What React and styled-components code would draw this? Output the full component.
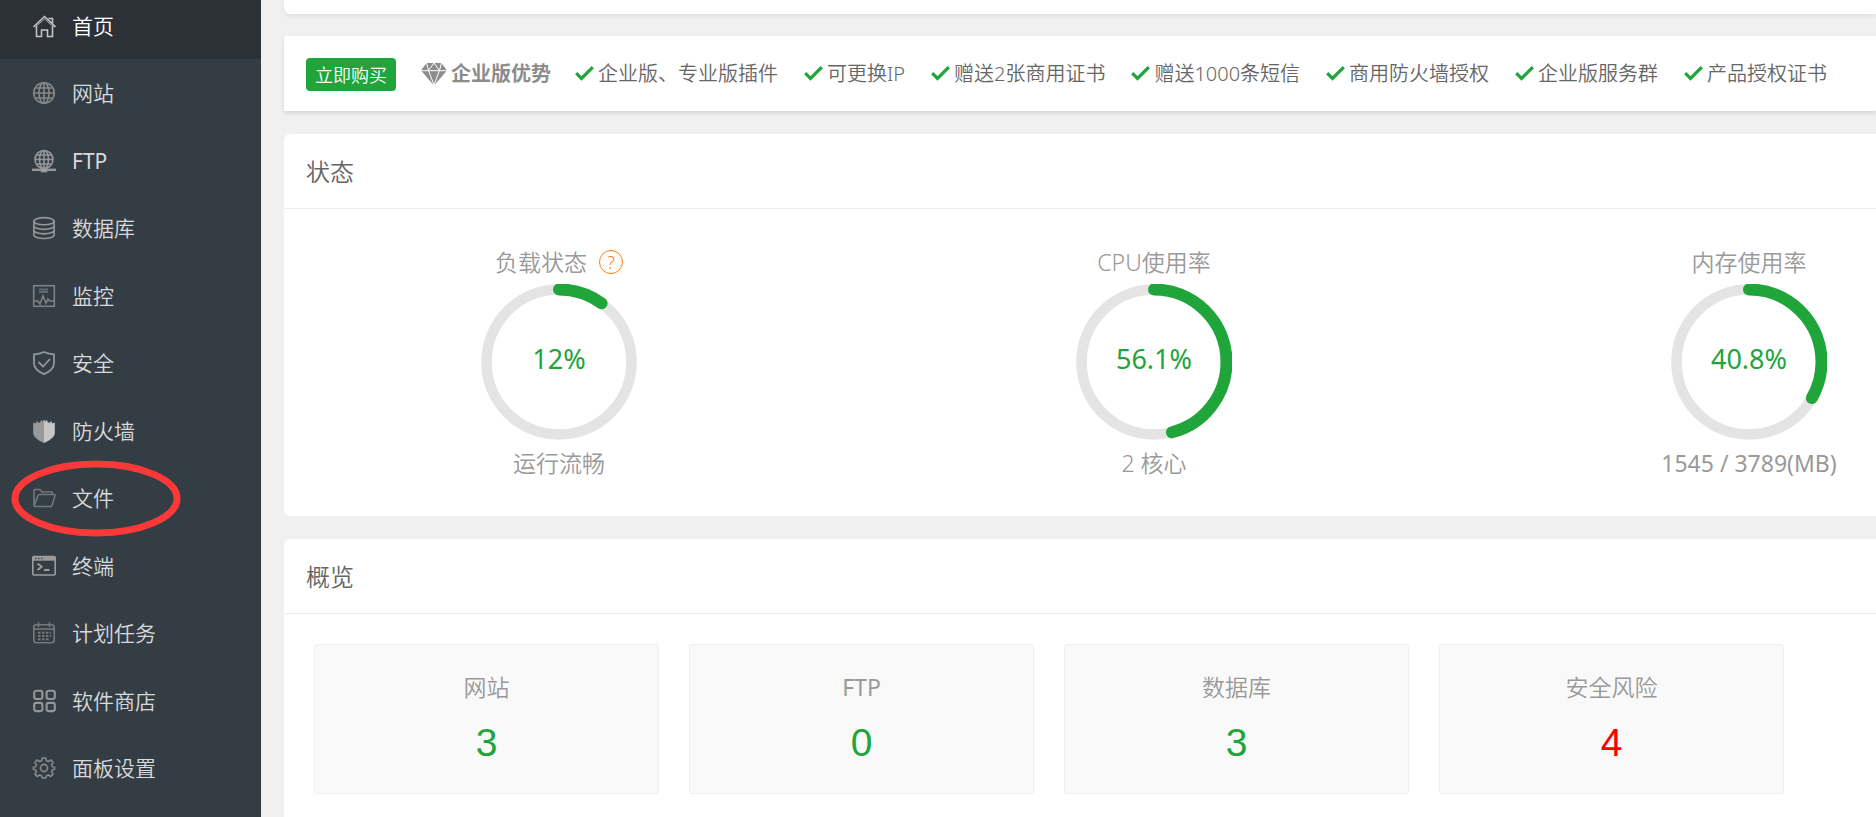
import React from "react";
import styled, { createGlobalStyle } from "styled-components";

const GlobalStyle = createGlobalStyle`
  *, *::before, *::after { box-sizing: border-box; }
  body {
    margin: 0;
    background: #f0f0f0;
    color: #666;
    font-family: "Noto Sans", "Noto Sans CJK SC", sans-serif;
    font-weight: 350;
  }
  ul { list-style: none; margin: 0; padding: 0; }
  a { color: inherit; text-decoration: none; }
  h2, p { margin: 0; font-weight: inherit; }
`;

const GREEN = "#20a53a";

// Latin-only strings need the regular cut to look as dark as the Chinese ones.
const textWeight = (text) => (/[\u4e00-\u9fff]/.test(text) ? 350 : 400);

const Page = styled.div`
  display: grid;
  grid-template-columns: 261px minmax(0, 1fr);
  min-height: 100vh;
`;

const Sidebar = styled.nav`
  background: #353d44;
  overflow: hidden;
`;

const MenuList = styled.ul`
  margin-top: -8px;
`;

const MenuItem = styled.li`
  position: relative;
  height: 67px;
  &:nth-child(even) { height: 68px; }
`;

const MenuLink = styled.a`
  display: flex;
  align-items: center;
  gap: 16px;
  height: 100%;
  padding-left: 32px;
  font-size: 21px;
  font-weight: ${(p) => p.$weight};
  line-height: 30px;
  color: ${(p) => (p.$active ? "#fff" : "#d8dbdd")};
  background: ${(p) => (p.$active ? "#2c3138" : "transparent")};
`;

const MenuIcon = styled.svg`
  flex: none;
  width: 24px;
  height: 24px;
  fill: none;
  stroke: ${(p) => p.$tone};
  stroke-width: 1.6;
`;

const Highlight = styled.svg`
  position: absolute;
  left: 11px;
  top: -4px;
  width: 170px;
  height: 77px;
  pointer-events: none;
`;

const Main = styled.main`
  display: flex;
  flex-direction: column;
  padding-left: 23px;
`;

const TopCard = styled.div`
  height: 14px;
  margin-bottom: 22px;
  background: #fff;
  border-bottom-left-radius: 6px;
  box-shadow: 0 2px 5px rgba(0, 0, 0, 0.07);
`;

const Promo = styled.section`
  display: flex;
  align-items: center;
  height: 75px;
  margin-bottom: 23px;
  padding-left: 22px;
  background: #fff;
  box-shadow: 0 2px 4px rgba(0, 0, 0, 0.12);
  font-size: 20px;
  line-height: 28px;
  white-space: nowrap;
`;

const BuyButton = styled.button`
  width: 90px;
  height: 33px;
  margin: 2px 25px 0 0;
  padding: 0;
  border: 0;
  border-radius: 4px;
  background: ${GREEN};
  color: #fff;
  font: inherit;
  font-size: 18px;
  cursor: pointer;
`;

const PromoTitle = styled.strong`
  display: flex;
  align-items: center;
  gap: 4px;
  margin-right: 24px;
  color: #8c8c8c;
  font-weight: 700;
`;

const Diamond = styled.svg`
  width: 26px;
  height: 24px;
`;

const FeatureList = styled.ul`
  display: flex;
  gap: 26px;
`;

const Feature = styled.li`
  display: flex;
  align-items: center;
  gap: 4px;
`;

const Check = styled.svg`
  width: 19px;
  height: 16px;
`;

const Card = styled.section`
  background: #fff;
  border-top-left-radius: 6px;
  border-bottom-left-radius: ${(p) => (p.$last ? 0 : 6)}px;
  margin-bottom: ${(p) => (p.$last ? 0 : 23)}px;
  flex: ${(p) => (p.$last ? "1" : "none")};
`;

const CardTitle = styled.h2`
  height: 75px;
  padding: 20px 22px;
  border-bottom: 1px solid #ececec;
  font-size: 24px;
  line-height: 36px;
`;

const GaugeRow = styled.div`
  display: flex;
  justify-content: space-between;
  padding: 41px 37px 41px 185px;
`;

const GaugeBox = styled.div`
  display: flex;
  flex-direction: column;
  align-items: center;
  width: 180px;
  color: #999;
  font-size: 23px;
  line-height: 24px;
  white-space: nowrap;
`;

const GaugeName = styled.p`
  display: flex;
  align-items: center;
  gap: 12px;
`;

const GaugeNote = styled.p`
  font-weight: ${(p) => p.$weight};
`;

const HelpLink = styled.a`
  width: 24px;
  height: 24px;
  border: 1px solid #ff7f0e;
  border-radius: 50%;
  color: #ff7f0e;
  font-size: 18px;
  line-height: 23px;
  text-align: center;
`;

const Dial = styled.div`
  display: grid;
  width: 156px;
  height: 156px;
  margin: 10px 0 11px;
  > * { grid-area: 1 / 1; }
`;

const DialValue = styled.span`
  padding-bottom: 6px;
  align-self: center;
  text-align: center;
  color: ${GREEN};
  font-size: 27px;
  font-weight: 400;
  line-height: 36px;
`;

const StatGrid = styled.div`
  display: grid;
  grid-template-columns: repeat(4, minmax(0, 1fr));
  gap: 30px;
  padding: 30px 92px 23px 30px;
`;

const Stat = styled.div`
  height: 150px;
  padding-top: 26px;
  border: 1px solid #efefef;
  border-radius: 3px;
  background: #f9f9f9;
  text-align: center;
`;

const StatLabel = styled.p`
  color: #999;
  font-size: 23px;
  font-weight: ${(p) => p.$weight};
  line-height: 32px;
`;

const StatValue = styled.a`
  display: block;
  margin-top: 18px;
  color: ${(p) => (p.$danger ? "#f00" : GREEN)};
  font-family: "Liberation Sans", sans-serif;
  font-size: 39px;
  line-height: 44px;
`;

const MENU = [
  {
    label: "首页",
    active: true,
    tone: "#c4c4c4",
    icon: (
      <>
        <path d="M1.5 13 12.5 2.5 23.5 13" />
        <path d="M4.5 12v10.5h5v-6.5h6v6.5h5V12" />
        <path d="M16.5 4.5h4v5" />
        <path d="M3.5 13 12.5 5l9 8" strokeWidth="0.8" />
      </>
    ),
  },
  {
    label: "网站",
    tone: "#858889",
    icon: (
      <>
        <circle cx="12" cy="12" r="10.3" />
        <ellipse cx="12" cy="12" rx="5" ry="10.3" />
        <path d="M12 2v20M2 12h20M3.5 7h17M3.5 17h17" />
      </>
    ),
  },
  {
    label: "FTP",
    tone: "#94979a",
    icon: (
      <>
        <circle cx="12" cy="10.5" r="9" />
        <ellipse cx="12" cy="10.5" rx="4.5" ry="9" />
        <path d="M12 2v17M3 10.5h18M4.5 6h15M4.5 15h15" />
        <path d="M0 20.8h24" strokeWidth="2.4" />
        <rect x="9.5" y="19.5" width="5" height="3" fill="#a8a8a8" />
      </>
    ),
  },
  {
    label: "数据库",
    tone: "#94979a",
    icon: (
      <>
        <ellipse cx="12" cy="5.2" rx="10.2" ry="3.6" />
        <path d="M1.8 5.2v13.6c0 2 4.6 3.7 10.2 3.7s10.2-1.7 10.2-3.7V5.2" />
        <path d="M1.8 9.8c0 2 4.6 3.6 10.2 3.6s10.2-1.6 10.2-3.6M1.8 14.3c0 2 4.6 3.6 10.2 3.6s10.2-1.6 10.2-3.6" />
      </>
    ),
  },
  {
    label: "监控",
    tone: "#7c8184",
    icon: (
      <>
        <rect x="1.7" y="1.7" width="20.6" height="20.6" />
        <path d="M7 5.5h9M7 8h9" stroke="#62686d" strokeWidth="1.8" />
        <path d="M2 17h4l2 3 3-8 3 7 2-4 1.5 2H22" />
      </>
    ),
  },
  {
    label: "安全",
    tone: "#94979a",
    icon: (
      <>
        <path d="M12 1c3.5 1.6 6.5 2.2 10 2.4v8.8c0 4.5-4 8.3-10 10.9C6 20.5 2 16.7 2 12.2V3.4C5.5 3.2 8.5 2.6 12 1z" strokeWidth="1.8" />
        <path d="m6.5 11 4.5 4.5L18 8" strokeWidth="1.8" />
      </>
    ),
  },
  {
    label: "防火墙",
    tone: "none",
    icon: (
      <>
        <path d="M12 .5 10.5 3V1.5H8.5V3.5H5.5V2.5H4V4.5L1.2 3.5V14c0 4 5 7.5 10.8 10z" fill="#999" />
        <path d="M12 .5 13.5 3V1.5H15.5V3.5H18.5V2.5H20V4.5L22.8 3.5V14c0 4-5 7.5-10.8 10z" fill="#c6c6c6" />
      </>
    ),
  },
  {
    label: "文件",
    tone: "#74797d",
    circled: true,
    icon: (
      <>
        <path d="M2 19.5V4.5Q2 3.5 3 3.5H8l2 2.5h9.5q1 0 1 1V8.5" />
        <path d="M2.2 20 6 9.5q.4-1 1.5-1H22q1.3 0 1 1.2L20 19.5q-.3 1-1.5 1H3q-1 0-.8-.5z" />
      </>
    ),
  },
  {
    label: "终端",
    tone: "#9a9c9e",
    icon: (
      <>
        <rect x="0.8" y="2.5" width="22.4" height="18.5" rx="1" />
        <path d="M1 4.6h22" strokeWidth="4.2" />
        <path d="M3 4.5h1.5M6 4.5h1.5M9 4.5h1.5" stroke="#454c52" />
        <path d="m5.5 9.5 4.2 3.3-4.2 3.3M12 16h5.5" strokeWidth="1.9" />
      </>
    ),
  },
  {
    label: "计划任务",
    tone: "#75797c",
    icon: (
      <>
        <rect x="1.8" y="3.8" width="20.4" height="18" rx="2.5" />
        <path d="M2 8h20" />
        <path d="M6.5 1.5V6M17.5 1.5V6" strokeWidth="1.8" />
        <path d="M6 11.7h2.5m1.5 0h2.5m1.5 0h2.5m1.5 0h1M6 15h2.5m1.5 0h2.5m1.5 0h2.5m1.5 0h1M6 18.3h2.5m1.5 0h2.5m1.5 0h2.5" strokeWidth="2" />
      </>
    ),
  },
  {
    label: "软件商店",
    tone: "#94979a",
    icon: (
      <g strokeWidth="2.1">
        <rect x="2.2" y="1.8" width="8.2" height="8.2" rx="2" />
        <rect x="14.6" y="1.8" width="8.2" height="8.2" rx="2" />
        <rect x="2.2" y="13.9" width="8.2" height="8.2" rx="2" />
        <rect x="14.6" y="13.9" width="8.2" height="8.2" rx="2" />
      </g>
    ),
  },
  {
    label: "面板设置",
    tone: "#85898c",
    icon: (
      <>
        <circle cx="12" cy="12" r="3.6" />
        <path d="M10.3 2h3.4l.7 2.7 1.9.8 2.4-1.5 2.4 2.4-1.5 2.4.8 1.9 2.2.6v1.9l-2.2.6-.8 1.9 1.5 2.4-2.4 2.4-2.4-1.5-1.9.8-.7 2.2h-3.4l-.7-2.2-1.9-.8-2.4 1.5-2.4-2.4 1.5-2.4-.8-1.9-2.2-.6v-1.9l2.2-.6.8-1.9-1.5-2.4 2.4-2.4 2.4 1.5 1.9-.8z" />
      </>
    ),
  },
];

const FEATURES = [
  "企业版、专业版插件",
  "可更换IP",
  "赠送2张商用证书",
  "赠送1000条短信",
  "商用防火墙授权",
  "企业版服务群",
  "产品授权证书",
];

const GAUGES = [
  { name: "负载状态", value: "12%", arc: 10, note: "运行流畅", help: true },
  { name: "CPU使用率", value: "56.1%", arc: 46, note: "2 核心" },
  { name: "内存使用率", value: "40.8%", arc: 33.3, note: "1545 / 3789(MB)" },
];

const STATS = [
  { label: "网站", value: 3 },
  { label: "FTP", value: 0 },
  { label: "数据库", value: 3 },
  { label: "安全风险", value: 4, danger: true },
];

function Gauge({ name, value, arc, note, help }) {
  return (
    <GaugeBox>
      <GaugeName>
        {name}
        {help && <HelpLink href="#load-help">?</HelpLink>}
      </GaugeName>
      <Dial>
        <svg width="156" height="156" viewBox="0 0 156 156" fill="none" aria-hidden="true">
          <circle cx="78" cy="78" r="72.5" stroke="#e4e4e4" strokeWidth="10.6" />
          <circle
            cx="78"
            cy="78"
            r="72.5"
            stroke={GREEN}
            strokeWidth="12"
            strokeLinecap="round"
            pathLength="100"
            strokeDasharray={`${arc} 100`}
            transform="rotate(-90 78 78)"
          />
        </svg>
        <DialValue>{value}</DialValue>
      </Dial>
      <GaugeNote $weight={textWeight(note)}>{note}</GaugeNote>
    </GaugeBox>
  );
}

export default function App() {
  return (
    <Page>
      <GlobalStyle />
      <Sidebar>
        <MenuList>
          {MENU.map((m) => (
            <MenuItem key={m.label}>
              <MenuLink href="#" $active={m.active} $weight={textWeight(m.label)}>
                <MenuIcon viewBox="0 0 24 24" $tone={m.tone} aria-hidden="true">
                  {m.icon}
                </MenuIcon>
                {m.label}
              </MenuLink>
              {m.circled && (
                <Highlight viewBox="0 0 170 77" fill="none" aria-hidden="true">
                  <ellipse cx="85" cy="38.5" rx="81" ry="34.5" stroke="#fc3938" strokeWidth="7" />
                </Highlight>
              )}
            </MenuItem>
          ))}
        </MenuList>
      </Sidebar>
      <Main>
        <TopCard />
        <Promo>
          <BuyButton type="button">立即购买</BuyButton>
          <PromoTitle>
            <Diamond viewBox="0 0 26 24" aria-hidden="true">
              <path d="M5.5 1h15L26 8.5 13 23.5 0 8.5z" fill="#8c8c8c" />
              <path d="M0 8.7h26M5.5 1l2 7.5L13 1l5.5 7.5 2-7.5M7.5 8.5 13 23l5.5-14.5" fill="none" stroke="#fff" strokeWidth="1" />
            </Diamond>
            企业版优势
          </PromoTitle>
          <FeatureList>
            {FEATURES.map((f) => (
              <Feature key={f}>
                <Check viewBox="0 0 19 16" aria-hidden="true">
                  <path d="M1.2 7.2 6.5 12.5 17.8 1.2" fill="none" stroke={GREEN} strokeWidth="3.2" />
                </Check>
                {f}
              </Feature>
            ))}
          </FeatureList>
        </Promo>
        <Card>
          <CardTitle>状态</CardTitle>
          <GaugeRow>
            {GAUGES.map((g) => (
              <Gauge key={g.name} {...g} />
            ))}
          </GaugeRow>
        </Card>
        <Card $last>
          <CardTitle>概览</CardTitle>
          <StatGrid>
            {STATS.map((s) => (
              <Stat key={s.label}>
                <StatLabel $weight={textWeight(s.label)}>{s.label}</StatLabel>
                <StatValue href="#" $danger={s.danger}>
                  {s.value}
                </StatValue>
              </Stat>
            ))}
          </StatGrid>
        </Card>
      </Main>
    </Page>
  );
}
